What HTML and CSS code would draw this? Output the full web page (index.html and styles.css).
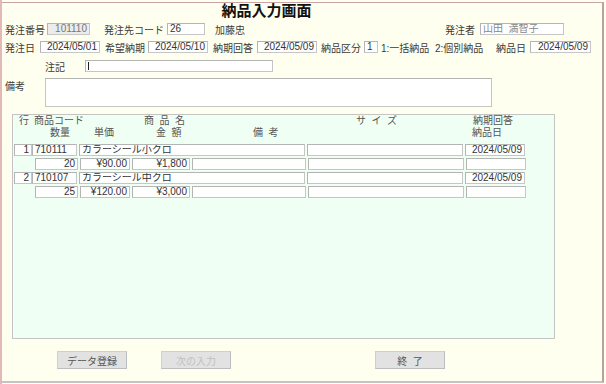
FILE: index.html
```html
<!DOCTYPE html>
<html lang="ja">
<head>
<meta charset="utf-8">
<title>納品入力画面</title>
<link rel="stylesheet" href="styles.css">
</head>
<body>
<div class="page">
  <h1 class="title">納品入力画面</h1>

  <div class="row r1">
    <span class="lbl w42">発注番号</span>
    <span class="fld dis num w43">101110</span>
    <span class="lbl w63 ml14">発注先コード</span>
    <span class="fld w38">26</span>
    <span class="lbl grow ml10">加藤忠</span>
    <span class="lbl w35">発注者</span>
    <span class="fld ro w84 mr38">山田&nbsp;&nbsp;満智子</span>
  </div>

  <div class="row r2">
    <span class="lbl w35">発注日</span>
    <span class="fld num w60">2024/05/01</span>
    <span class="lbl w43 ml5">希望納期</span>
    <span class="fld num w60">2024/05/10</span>
    <span class="lbl w44 ml5">納期回答</span>
    <span class="fld num w60">2024/05/09</span>
    <span class="lbl w43 ml4">納品区分</span>
    <span class="fld w14">1</span>
    <span class="lbl w115 ml3">1:一括納品&nbsp;&nbsp;2:個別納品</span>
    <span class="lbl w34">納品日</span>
    <span class="fld num w61">2024/05/09</span>
  </div>

  <div class="row r3">
    <span class="lbl w40 ml40">注記</span>
    <span class="fld w188 caret"></span>
  </div>

  <div class="row r4">
    <span class="lbl w40">備考</span>
    <span class="area"></span>
  </div>

  <div class="grid">
    <div class="ghead">
      <span class="h1a">行</span>
      <span class="h1b">商品コード</span>
      <span class="h1c">商&nbsp;&nbsp;品&nbsp;&nbsp;名</span>
      <span class="h1d">サ&nbsp;&nbsp;イ&nbsp;&nbsp;ズ</span>
      <span class="h1e">納期回答</span>
    </div>
    <div class="ghead h2row">
      <span class="h2a">数量</span>
      <span class="h2b">単価</span>
      <span class="h2c">金&nbsp;&nbsp;額</span>
      <span class="h2d">備&nbsp;&nbsp;考</span>
      <span class="h2e">納品日</span>
    </div>

    <div class="grow-a">
      <span class="fld num c18">1</span>
      <span class="fld c44">710111</span>
      <span class="fld c226 ml2">カラーシール小クロ</span>
      <span class="fld c156 ml2">&nbsp;</span>
      <span class="fld num c60 ml2">2024/05/09</span>
    </div>
    <div class="grow-b">
      <span class="fld num c43">20</span>
      <span class="fld num c50 ml2">¥90.00</span>
      <span class="fld num c58 ml2">¥1,800</span>
      <span class="fld c114 ml2">&nbsp;</span>
      <span class="fld c156 ml2">&nbsp;</span>
      <span class="fld c60 ml2">&nbsp;</span>
    </div>
    <div class="grow-a">
      <span class="fld num c18">2</span>
      <span class="fld c44">710107</span>
      <span class="fld c226 ml2">カラーシール中クロ</span>
      <span class="fld c156 ml2">&nbsp;</span>
      <span class="fld num c60 ml2">2024/05/09</span>
    </div>
    <div class="grow-b">
      <span class="fld num c43">25</span>
      <span class="fld num c50 ml2">¥120.00</span>
      <span class="fld num c58 ml2">¥3,000</span>
      <span class="fld c114 ml2">&nbsp;</span>
      <span class="fld c156 ml2">&nbsp;</span>
      <span class="fld c60 ml2">&nbsp;</span>
    </div>
  </div>

  <div class="buttons">
    <button class="btn b1">データ登録</button>
    <button class="btn b2" disabled>次の入力</button>
    <button class="btn b3">終&nbsp;&nbsp;了</button>
  </div>
</div>
</body>
</html>
```
FILE: styles.css
```css
html, body {
  margin: 0;
  padding: 0;
  background: #fffff0;
}
body {
  width: 606px;
  height: 384px;
  overflow: hidden;
  border-left: 2px solid #e3b8b8;
  box-sizing: border-box;
  font-family: "Liberation Sans", "Noto Sans CJK JP", sans-serif;
  font-size: 10px;
  color: #3a3a3a;
}
.page {
  margin-top: 2px;
  width: 602px;
  height: 381px;
  box-sizing: border-box;
  border-top: 1px solid #c8a4a4;
  border-right: 2px solid #b9a2a2;
  border-bottom: 2px solid #c4c4c4;
  padding-left: 3px;
  position: relative;
}
.title {
  margin: 0;
  height: 17px;
  line-height: 15px;
  text-align: center;
  font-size: 15px;
  font-weight: bold;
  color: #111;
  padding-right: 74px;
}
.row {
  display: flex;
  align-items: center;
  height: 18px;
}
.r3 { margin-top: 1px; }
.r4 { align-items: flex-start; height: auto; margin-top: 3px; }
.lbl { white-space: nowrap; flex: none; }
.grow { flex: 1; }
.fld {
  display: block;
  flex: none;
  box-sizing: border-box;
  height: 12px;
  line-height: 10px;
  border: 1px solid #c6c6c6;
  border-top-color: #b4b4b4;
  border-left-color: #b4b4b4;
  background: #fff;
  padding: 0 2px;
  white-space: nowrap;
  overflow: hidden;
  color: #333;
}
.num { text-align: right; }
.dis { background: #ececec; color: #777; }
.ro { color: #888; }
.caret { position: relative; }
.caret::before {
  content: "";
  position: absolute;
  left: 2px; top: 1px;
  width: 1px; height: 8px;
  background: #222;
}
.area {
  display: block;
  box-sizing: border-box;
  width: 447px;
  height: 29px;
  border: 1px solid #c6c6c6;
  border-top-color: #b4b4b4;
  background: #fff;
}

.w14 { width: 14px; } .w34 { width: 34px; } .w35 { width: 35px; } .w38 { width: 38px; }
.w40 { width: 40px; } .w42 { width: 42px; } .w43 { width: 43px; } .w44 { width: 44px; }
.w60 { width: 60px; } .w61 { width: 61px; } .w63 { width: 63px; } .w84 { width: 84px; }
.w115 { width: 115px; } .w188 { width: 188px; }
.ml2 { margin-left: 2px; } .ml3 { margin-left: 3px; } .ml4 { margin-left: 4px; } .ml5 { margin-left: 5px; }
.ml10 { margin-left: 10px; } .ml14 { margin-left: 14px; } .ml40 { margin-left: 40px; }
.mr38 { margin-right: 38px; }

.grid {
  margin: 7px 0 0 7px;
  width: 543px;
  height: 225px;
  box-sizing: border-box;
  border: 1px solid #c4c4c4;
  background: #effff3;
  padding: 0 0 0 1px;
}
.ghead {
  display: flex;
  height: 11px;
  line-height: 11px;
  color: #555;
  white-space: nowrap;
}
.ghead span { display: block; flex: none; }
.h1a { margin-left: 5px; width: 15px; }
.h1b { width: 110px; }
.h1c { width: 212px; }
.h1d { width: 117px; }
.h2row { margin-top: 1px; }
.h2a { margin-left: 36px; width: 44px; }
.h2b { width: 62px; }
.h2c { width: 97px; }
.h2d { width: 219px; }
.grow-a, .grow-b {
  display: flex;
  margin-top: 2px;
}
.h2row + .grow-a { margin-top: 6px; }
.grow-b { margin-left: 21px; }
.c18 { width: 18px; } .c43 { width: 43px; } .c44 { width: 45px; } .c50 { width: 50px; }
.c58 { width: 58px; } .c60 { width: 60px; } .c114 { width: 114px; } .c156 { width: 156px; }
.c226 { width: 226px; }

.buttons {
  display: flex;
  margin-top: 12px;
  padding-left: 52px;
}
.btn {
  box-sizing: border-box;
  height: 18px;
  width: 70px;
  padding: 0;
  font-family: "Liberation Sans", "Noto Sans CJK JP", sans-serif;
  font-size: 10px;
  color: #555;
  background: #e2e2e2;
  border: 1px solid #cfcfcf;
  border-right-color: #bdbdbd;
  border-bottom-color: #bdbdbd;
}
.b2 { margin-left: 34px; color: #c0c0c0; }
.b3 { margin-left: 144px; }
```
